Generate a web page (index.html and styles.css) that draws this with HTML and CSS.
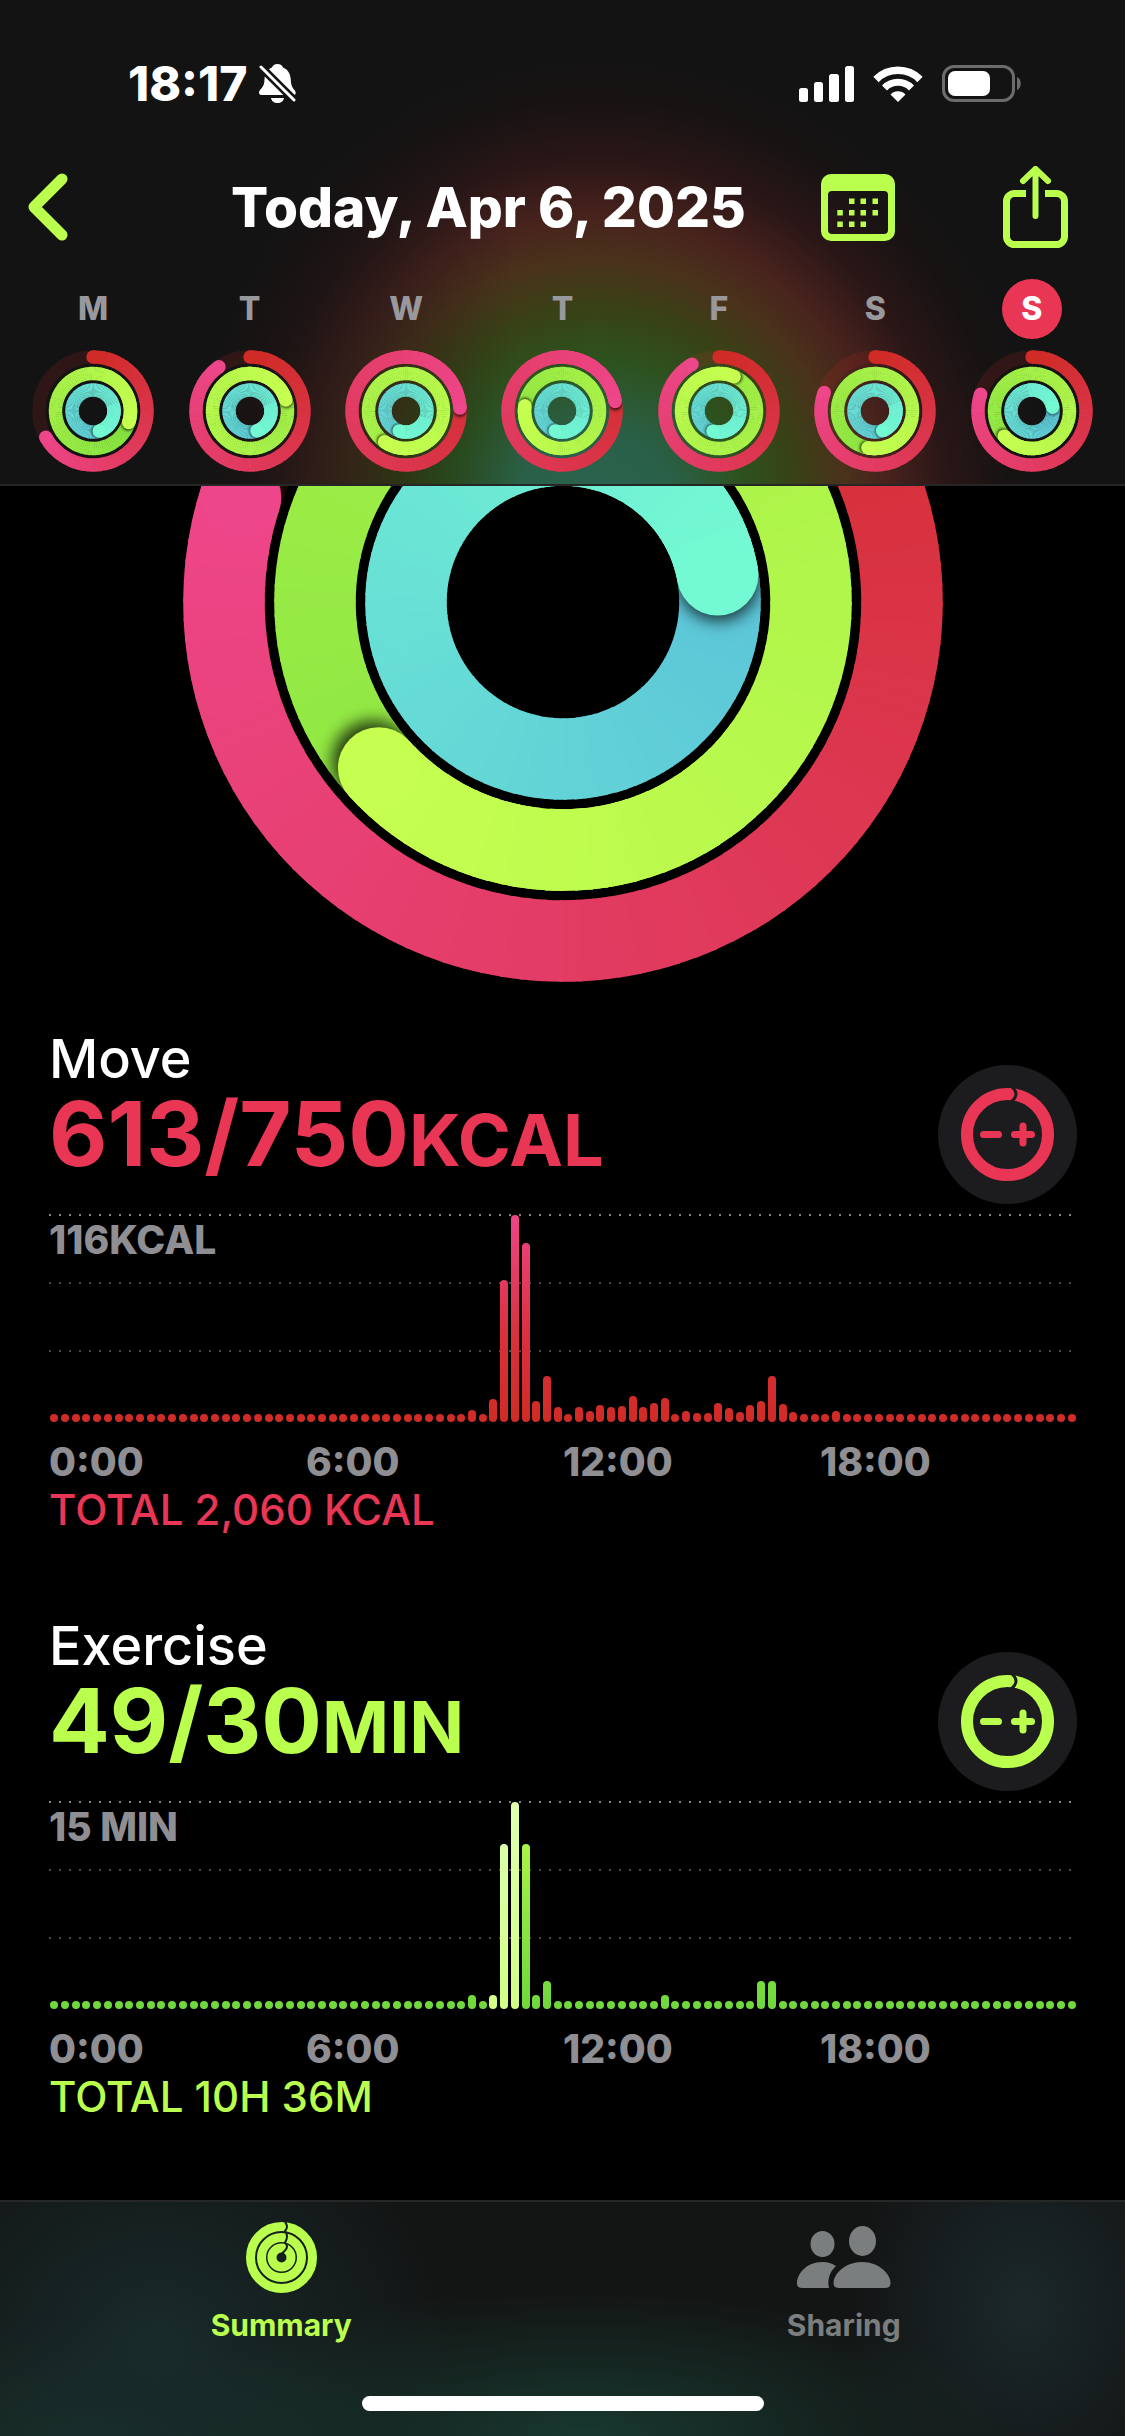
FILE: index.html
```html
<!DOCTYPE html>
<html lang="en">
<head>
    <meta charset="UTF-8">
    <meta name="viewport" content="width=device-width, initial-scale=1.0">
    <title>Activity</title>
    <link rel="stylesheet" href="styles.css">
</head>
<body>

<header class="top-bar">
    <div class="status-bar">
        <div class="status-left">
            <span class="clock">18:17</span>
            <svg class="bell" viewBox="0 0 37 39" aria-hidden="true">
                <path fill="#fff" d="M18.500 0c3 0 5 1.800 5.500 3.500 5.500 2 7.500 7 7.800 12.500.300 5 1 7 4 10.500 1.200 1.400 1.500 4.500-1.300 4.500H2.500c-3 0-3-3.500-1.500-5 3.500-3.500 4.200-6 4.500-10.500C5.800 10 8 5.500 13 3.500 13.500 1.800 15.500 0 18.500 0zM12 34h13c-.5 3-3 5-6.500 5S12.500 37 12 34z"/>
                <path stroke="#131313" stroke-width="8" d="M1 2l36 36"/>
                <path stroke="#fff" stroke-width="3" stroke-linecap="round" d="M2 3l33 33"/>
            </svg>
        </div>
        <div class="status-right">
            <svg class="signal" viewBox="0 0 55 36" fill="#fff" aria-hidden="true">
                <rect x="0" y="22" width="9" height="14" rx="2.500"/>
                <rect x="15" y="16" width="9" height="20" rx="2.500"/>
                <rect x="30" y="8" width="10" height="28" rx="2.500"/>
                <rect x="46" y="0" width="9" height="36" rx="2.500"/>
            </svg>
            <svg class="wifi" viewBox="0 0 50 36" fill="none" stroke="#fff" aria-hidden="true">
                <path stroke-width="7.500" d="M3 13.500a31 31 0 0 1 44 0"/>
                <path stroke-width="7" d="M11.500 22a19 19 0 0 1 27 0"/>
                <path fill="#fff" stroke="none" d="M25 36l-7.500-7.500a10.500 10.500 0 0 1 15 0z"/>
            </svg>
            <svg class="battery" viewBox="0 0 80 38" aria-hidden="true">
                <rect x="1.500" y="1.500" width="70" height="34" rx="10.500" fill="none" stroke="#6c6c6c" stroke-width="3"/>
                <path fill="#6c6c6c" d="M75 12c5 1.500 5 11.500 0 13z"/>
                <rect x="6" y="6" width="42" height="25" rx="7" fill="#fff"/>
            </svg>
        </div>
    </div>

    <nav class="nav-bar">
        <button type="button" class="icon-button" aria-label="Back">
            <svg class="chevron" viewBox="0 0 40 68" fill="none" stroke="#baff4d" stroke-width="11" stroke-linecap="round" stroke-linejoin="round">
                <path d="M34 6L6 34l28 28"/>
            </svg>
        </button>
        <h1>Today, Apr 6, 2025</h1>
        <button type="button" class="icon-button" aria-label="Calendar">
            <svg class="calendar" viewBox="0 0 74 67" fill="#baff4d">
                <path fill-rule="evenodd" d="M10 0h54a10 10 0 0 1 10 10v47a10 10 0 0 1-10 10H10A10 10 0 0 1 0 57V10A10 10 0 0 1 10 0zm1 17a4 4 0 0 0-4 4v35a4 4 0 0 0 4 4h52a4 4 0 0 0 4-4V21a4 4 0 0 0-4-4z"/>
                <path d="M28 24.500h5.500V30H28zM39.500 24.500H45V30h-5.500zM51.500 24.500H57V30h-5.500zM16.300 36h5.500v5.500h-5.500zM28 36h5.500v5.500H28zM39.500 36H45v5.500h-5.500zM51.500 36H57v5.500h-5.500zM16.300 47.500h5.500V53h-5.500zM28 47.500h5.500V53H28zM39.500 47.500H45V53h-5.500z"/>
            </svg>
        </button>
        <button type="button" class="icon-button" aria-label="Share">
            <svg class="share" viewBox="0 0 65 82" fill="none" stroke="#baff4d">
                <path stroke-width="7" d="M23 27.500H11.500a8 8 0 0 0-8 8v35a8 8 0 0 0 8 8h42a8 8 0 0 0 8-8v-35a8 8 0 0 0-8-8H42"/>
                <path stroke-width="6" stroke-linecap="round" stroke-linejoin="round" d="M32.500 50V3M20 15L32.500 3 45 15"/>
            </svg>
        </button>
    </nav>

    <div class="week">
        <a class="day" href="#mon"><span class="day-name">M</span><svg class="day-rings" data-rings="241,468,523"></svg></a>
        <a class="day" href="#tue"><span class="day-name">T</span><svg class="day-rings" data-rings="325,793,521"></svg></a>
        <a class="day" href="#wed"><span class="day-name">W</span><svg class="day-rings" data-rings="447,935,559"></svg></a>
        <a class="day" href="#thu"><span class="day-name">T</span><svg class="day-rings" data-rings="440,638,559"></svg></a>
        <a class="day" href="#fri"><span class="day-name">F</span><svg class="day-rings" data-rings="330,744,557"></svg></a>
        <a class="day" href="#sat"><span class="day-name">S</span><svg class="day-rings" data-rings="290,551,519"></svg></a>
        <a class="day" href="#sun"><span class="day-name selected">S</span><svg class="day-rings" data-rings="288,588,440"></svg></a>
    </div>
</header>

<main>
    <div class="hero">
        <svg class="hero-rings" data-rings="288,588,440"></svg>
    </div>

    <section class="metric move">
        <div class="metric-header">
            <div>
                <h2>Move</h2>
                <p class="value">613/750<span class="unit">KCAL</span></p>
            </div>
            <button type="button" class="adjust" aria-label="Change move goal">
                <svg viewBox="0 0 93 93" fill="none" stroke="currentColor" stroke-linecap="round">
                    <circle cx="46.500" cy="46.500" r="40.500" stroke-width="12"/>
                    <path stroke="#1c1c1e" stroke-width="3" d="M50 -2q10 8 0 16"/>
                    <path stroke-width="7" d="M22.500 46.500h15M53.500 46.500h17M62 38v17"/>
                </svg>
            </button>
        </div>
        <div class="chart">
            <span class="chart-max">116KCAL</span>
            <div class="bars" id="moveBars"></div>
        </div>
        <div class="axis"><span>0:00</span><span>6:00</span><span>12:00</span><span>18:00</span></div>
        <p class="total">TOTAL 2,060 KCAL</p>
    </section>

    <section class="metric exercise">
        <div class="metric-header">
            <div>
                <h2>Exercise</h2>
                <p class="value">49/30<span class="unit">MIN</span></p>
            </div>
            <button type="button" class="adjust" aria-label="Change exercise goal">
                <svg viewBox="0 0 93 93" fill="none" stroke="currentColor" stroke-linecap="round">
                    <circle cx="46.500" cy="46.500" r="40.500" stroke-width="12"/>
                    <path stroke="#1c1c1e" stroke-width="3" d="M50 -2q10 8 0 16"/>
                    <path stroke-width="7" d="M22.500 46.500h15M53.500 46.500h17M62 38v17"/>
                </svg>
            </button>
        </div>
        <div class="chart">
            <span class="chart-max">15 MIN</span>
            <div class="bars" id="exerciseBars"></div>
        </div>
        <div class="axis"><span>0:00</span><span>6:00</span><span>12:00</span><span>18:00</span></div>
        <p class="total">TOTAL 10H 36M</p>
    </section>
</main>

<footer class="tab-bar">
    <nav class="tabs">
        <a class="tab active" href="#summary">
            <svg class="summary-icon" viewBox="0 0 71 71" fill="none" aria-hidden="true">
                <circle cx="35.500" cy="35.500" r="31" stroke="#baff4d" stroke-width="9"/>
                <circle cx="35.500" cy="35.500" r="20" stroke="#baff4d" stroke-width="9"/>
                <circle cx="35.500" cy="35.500" r="9.500" stroke="#baff4d" stroke-width="9"/>
                <path stroke="#14201f" stroke-width="2" d="M39 0q4 4.500 0 9 4 5.500 0 11.500 4 4 0 8l-3 3"/>
            </svg>
            <span>Summary</span>
        </a>
        <a class="tab" href="#sharing">
            <svg class="sharing-icon" viewBox="0 0 94 62" fill="#7b7e7e" aria-hidden="true">
                <ellipse cx="25.500" cy="18" rx="12" ry="13"/>
                <ellipse cx="65.500" cy="15" rx="13.500" ry="15"/>
                <path d="M42 62c-4 0-5.500-2-5.500-5C36.500 48 48 36 65 36s28.500 12 28.500 21c0 3-1.500 5-5.500 5z"/>
                <path d="M5 62c-3.500 0-5-2-5-5 0-9 9-21 25.500-21 5 0 9.500 1.500 13.500 4-6 5.500-9 13-7 22z"/>
            </svg>
            <span>Sharing</span>
        </a>
    </nav>
    <div class="home-indicator"></div>
</footer>

<script src="script.js"></script>
</body>
</html>
```

FILE: styles.css
```css
* {
    box-sizing: border-box;
}
body {
    display: flex;
    flex-direction: column;
    min-height: 100vh;
    margin: 0;
    background: #000;
    color: #fff;
    font-family: Inter, "Liberation Sans", sans-serif;
}
h1, h2, p {
    margin: 0;
}
a {
    color: inherit;
    text-decoration: none;
}
svg {
    display: block;
}
button {
    padding: 0;
    border: none;
    background: none;
    cursor: pointer;
}

/* Top bar */
.top-bar {
    position: sticky;
    top: 0;
    z-index: 1;
    border-bottom: 2px solid #262626;
    background:
        linear-gradient(to right, #131313 12%, rgba(19, 19, 19, 0.5) 28%, rgba(19, 19, 19, 0) 46%),
        radial-gradient(circle at 53% 510px, #29634f 0, #2a6048 80px, #2d521f 150px, #384216 200px, #4a321b 250px, #47221d 295px, #2a1617 350px, #181313 410px, #131313 460px);
}
.status-bar {
    display: flex;
    justify-content: space-between;
    align-items: center;
    height: 146px;
    padding: 21px 103px 0 128px;
}
.status-left, .status-right {
    display: flex;
    align-items: center;
}
.status-left {
    gap: 12px;
}
.status-right {
    gap: 19px;
}
.clock {
    font-size: 48px;
    font-weight: 800;
}
.bell {
    width: 37px;
    height: 39px;
}
.signal {
    width: 55px;
    height: 36px;
}
.wifi {
    width: 50px;
    height: 36px;
}
.battery {
    width: 80px;
    height: 38px;
}
.nav-bar {
    display: grid;
    grid-template-columns: 203px 1fr 182px 65px;
    align-items: center;
    height: 122px;
    padding: 0 57px 0 28px;
}
.nav-bar h1 {
    font-size: 55px;
    font-weight: 800;
    white-space: nowrap;
}
.icon-button {
    justify-self: start;
}
.chevron {
    width: 40px;
    height: 68px;
}
.calendar {
    width: 74px;
    height: 67px;
}
.share {
    width: 65px;
    height: 82px;
}
.week {
    display: grid;
    grid-template-columns: repeat(7, 1fr);
    padding: 11px 15px 12px;
}
.day {
    display: flex;
    flex-direction: column;
    align-items: center;
    gap: 11px;
}
.day-name {
    width: 60px;
    height: 60px;
    border-radius: 50%;
    color: #98989d;
    font-size: 32px;
    font-weight: 800;
    line-height: 60px;
    text-align: center;
}
.day-name.selected {
    background: #e93655;
    color: #fff;
}
.day-rings {
    width: 122px;
    height: 122px;
}

/* Large rings, scrolled partly under the top bar */
.hero {
    display: flex;
    justify-content: center;
    margin-top: -264px;
}
.hero-rings {
    width: 760px;
    height: 760px;
}

/* Metrics */
.metric {
    padding: 0 48px 0 49px;
    margin-bottom: 83px;
}
.hero + .metric {
    margin-top: 47px;
}
.metric:last-child {
    margin-bottom: 40px;
}
.move {
    color: #e93655;
}
.exercise {
    color: #baff4d;
}
.metric-header {
    display: flex;
    justify-content: space-between;
    height: 175px;
    margin-bottom: 10px;
}
.metric h2 {
    color: #fff;
    font-size: 54px;
    font-weight: 500;
    line-height: 60px;
}
.value {
    font-size: 90px;
    font-weight: 700;
    line-height: 90px;
}
.unit {
    font-size: 72px;
}
.adjust {
    display: flex;
    align-items: center;
    justify-content: center;
    align-self: flex-end;
    width: 139px;
    height: 139px;
    border-radius: 50%;
    background: #1c1c1e;
    color: inherit;
}
.adjust svg {
    width: 93px;
    height: 93px;
}
.chart {
    display: grid;
    height: 208px;
    background:
        linear-gradient(to right, #858585 2px, transparent 2px) 0 0 / 10px 2px repeat-x,
        linear-gradient(to right, #484848 2px, transparent 2px) 0 68px / 10px 2px repeat-x,
        linear-gradient(to right, #484848 2px, transparent 2px) 0 136px / 10px 2px repeat-x;
}
.chart-max, .bars {
    grid-area: 1 / 1;
}
.chart-max {
    color: #8e8e93;
    font-size: 39px;
    font-weight: 800;
    line-height: 52px;
}
.bars {
    display: grid;
    grid-template-columns: repeat(96, 1fr);
    align-items: end;
    justify-items: center;
}
.bar {
    width: 8px;
    border-radius: 4px;
    background: linear-gradient(to top, #d02b26, #d9303a 40%, #ee4588) bottom / 100% 207px;
}
.exercise .bar {
    background-image: linear-gradient(to top, #6fd83c, #8ae342 40%, #baff4d);
}
.exercise .bar.workout {
    background-image: linear-gradient(to top, #d3ff86, #e0ffb0);
}
.axis {
    display: grid;
    grid-template-columns: repeat(4, 1fr);
    margin-top: 15px;
    color: #8e8e93;
    font-size: 39px;
    font-weight: 800;
    line-height: 50px;
}
.total {
    font-size: 42px;
    font-weight: 500;
    line-height: 46px;
}

/* Tab bar */
.tab-bar {
    position: sticky;
    bottom: 0;
    z-index: 1;
    height: 236px;
    margin-top: auto;
    padding-top: 20px;
    border-top: 2px solid #262828;
    background:
        radial-gradient(ellipse 420px 150px at 52% 100%, #18382f, transparent),
        radial-gradient(ellipse 300px 260px at 14% 60%, #182b2a, transparent),
        radial-gradient(ellipse 180px 220px at 91% 45%, #1b282a, transparent),
        radial-gradient(ellipse 300px 120px at 8% 100%, #183029, transparent),
        #131414;
}
.tabs {
    display: grid;
    grid-template-columns: 1fr 1fr;
}
.tab {
    display: flex;
    flex-direction: column;
    align-items: center;
    gap: 14px;
    color: #7b7e7e;
    font-size: 30px;
    font-weight: 700;
    line-height: 36px;
}
.tab.active {
    color: #baff4d;
}
.summary-icon {
    width: 71px;
    height: 71px;
}
.sharing-icon {
    width: 94px;
    height: 62px;
    margin: 4px 0 5px;
}
.home-indicator {
    width: 402px;
    height: 15px;
    margin: 53px auto 0;
    border-radius: 8px;
    background: #fff;
}
```

FILE: script.js
```js
const SVG_NS = 'http://www.w3.org/2000/svg';

// start and end colour of the move, exercise and stand rings
const ringColors = [
    [[208, 43, 38], [238, 70, 138]],
    [[111, 217, 59], [198, 255, 80]],
    [[86, 184, 217], [116, 250, 211]]
];

function add(parent, name, attrs) {
    const el = document.createElementNS(SVG_NS, name);
    for (const key in attrs) {
        el.setAttribute(key, attrs[key]);
    }
    parent.appendChild(el);
    return el;
}

function point(c, r, deg) {
    const a = (deg - 90) * Math.PI / 180;
    return [c + r * Math.cos(a), c + r * Math.sin(a)];
}

function mix(colors, t) {
    return 'rgb(' + colors[0].map((v, i) => Math.round(v + (colors[1][i] - v) * t)).join(',') + ')';
}

function drawRing(svg, c, r, width, total, colors, id) {
    // empty part of the ring
    add(svg, 'circle', { cx: c, cy: c, r: r, fill: 'none', stroke: mix(colors, 0), 'stroke-width': width, 'stroke-opacity': 0.15 });

    function arc(from, to) {
        for (let d = from; d < to; d += 3) {
            const a = point(c, r, d);
            const b = point(c, r, Math.min(d + 3.6, to));
            add(svg, 'path', {
                d: `M${a[0]} ${a[1]}A${r} ${r} 0 0 1 ${b[0]} ${b[1]}`,
                fill: 'none', stroke: mix(colors, d / total), 'stroke-width': width
            });
        }
    }

    const end = point(c, r, total);
    if (total < 360) {
        const start = point(c, r, 0);
        add(svg, 'circle', { cx: start[0], cy: start[1], r: width / 2, fill: mix(colors, 0) });
        arc(0, total);
    } else {
        arc(total - 360, total);
        // the tip throws a shadow on the lap below it
        const o = r + width / 2;
        const i = r - width / 2;
        const clip = add(svg, 'clipPath', { id: id });
        add(clip, 'path', {
            'clip-rule': 'evenodd',
            d: `M${c - o} ${c}a${o} ${o} 0 1 0 ${2 * o} 0a${o} ${o} 0 1 0 ${-2 * o} 0M${c - i} ${c}a${i} ${i} 0 1 0 ${2 * i} 0a${i} ${i} 0 1 0 ${-2 * i} 0`
        });
        const group = add(svg, 'g', { 'clip-path': `url(#${id})` });
        const tip = point(c, r, total + 2);
        const shadow = add(group, 'circle', { cx: tip[0], cy: tip[1], r: width / 2, fill: '#000', 'fill-opacity': 0.75 });
        shadow.style.filter = `blur(${width / 10}px)`;
        arc(total - 90, total);
    }
    add(svg, 'circle', { cx: end[0], cy: end[1], r: width / 2, fill: mix(colors, 1) });
}

function drawRings(svg, size, radii, width, name) {
    svg.setAttribute('viewBox', `0 0 ${size} ${size}`);
    svg.dataset.rings.split(',').forEach((total, i) => {
        drawRing(svg, size / 2, radii[i], width, Number(total), ringColors[i], name + i);
    });
}

document.querySelectorAll('.day-rings').forEach((svg, i) => {
    drawRings(svg, 122, [54, 37.5, 21], 13.4, 'day' + i + 'ring');
});
drawRings(document.querySelector('.hero-rings'), 760, [339, 248, 157], 81.5, 'hero');

// One bar per quarter of an hour, heights keyed by quarter
function drawBars(id, heights, workout) {
    const box = document.getElementById(id);
    for (let i = 0; i < 96; i++) {
        const bar = document.createElement('div');
        bar.className = workout.includes(i) ? 'bar workout' : 'bar';
        bar.style.height = (heights[i] || 8) + 'px';
        box.appendChild(bar);
    }
}

const move = {};
[12, 8, 23, 142, 207, 179, 21, 46, 15, 8, 15, 11, 17, 15, 16, 26, 15, 19, 24, 8, 11, 9, 9,
    19, 14, 10, 17, 21, 46, 18, 10, 8, 8, 8, 11].forEach((h, i) => { move[39 + i] = h; });

drawBars('moveBars', move, []);
drawBars('exerciseBars', { 39: 14, 41: 14, 42: 165, 43: 207, 44: 165, 45: 14, 46: 28, 57: 14, 66: 28, 67: 28 }, [41, 42, 43]);
```
